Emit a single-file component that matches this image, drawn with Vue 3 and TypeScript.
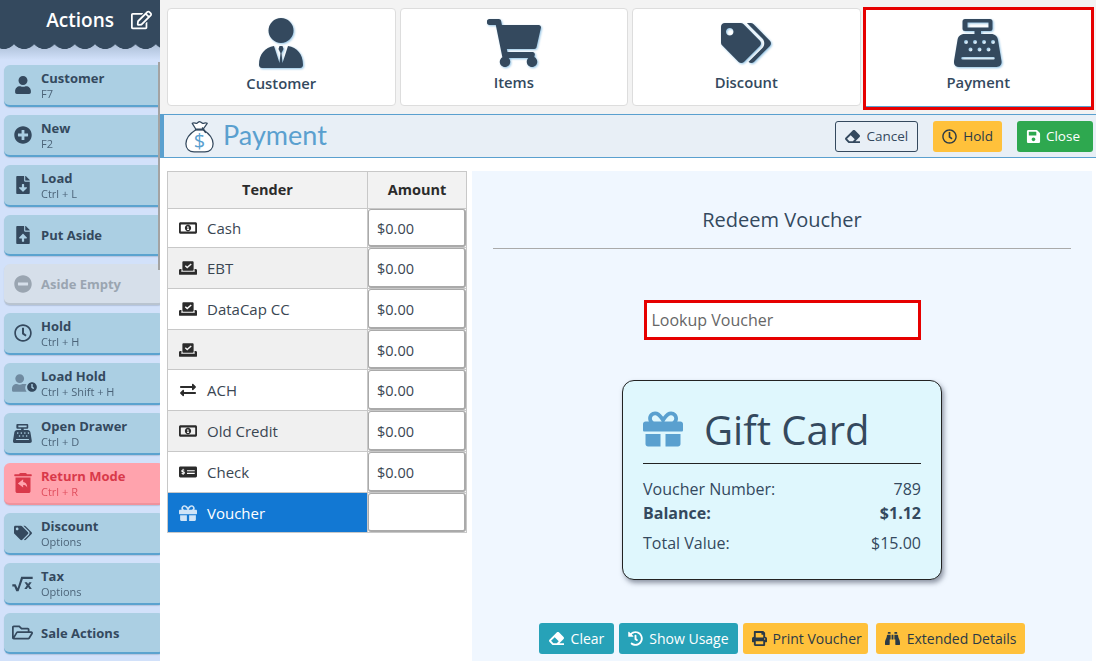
<script setup lang="ts">
import { h } from 'vue'

type Icon = { vb: string; d: string }

const icons: Record<string, Icon> = {
  user: { vb: '0 0 448 512', d: 'M224 256c70.7 0 128-57.3 128-128S294.7 0 224 0 96 57.3 96 128s57.3 128 128 128zm89.6 32h-16.7c-22.2 10.2-46.9 16-72.9 16s-50.6-5.8-72.9-16h-16.7C60.2 288 0 348.2 0 422.4V464c0 26.5 21.5 48 48 48h352c26.5 0 48-21.5 48-48v-41.6c0-74.2-60.2-134.4-134.4-134.4z' },
  plus: { vb: '0 0 512 512', d: 'M256 8C119 8 8 119 8 256s111 248 248 248 248-111 248-248S393 8 256 8zm144 276c0 6.6-5.4 12-12 12h-92v92c0 6.6-5.4 12-12 12h-56c-6.6 0-12-5.4-12-12v-92h-92c-6.6 0-12-5.4-12-12v-56c0-6.6 5.4-12 12-12h92v-92c0-6.6 5.4-12 12-12h56c6.6 0 12 5.4 12 12v92h92c6.6 0 12 5.4 12 12v56z' },
  minus: { vb: '0 0 512 512', d: 'M256 8C119 8 8 119 8 256s111 248 248 248 248-111 248-248S393 8 256 8zM124 296c-6.6 0-12-5.4-12-12v-56c0-6.6 5.4-12 12-12h264c6.6 0 12 5.4 12 12v56c0 6.6-5.4 12-12 12H124z' },
  fileDown: { vb: '0 0 384 512', d: 'M224 136V0H24C10.7 0 0 10.7 0 24v464c0 13.3 10.7 24 24 24h336c13.3 0 24-10.7 24-24V160H248c-13.2 0-24-10.8-24-24zm76.45 211.36l-96.42 95.7c-6.65 6.61-17.39 6.61-24.04 0l-96.42-95.7C73.42 337.29 80.54 320 94.82 320H160v-80c0-8.84 7.16-16 16-16h32c8.84 0 16 7.16 16 16v80h65.18c14.28 0 21.4 17.29 11.27 27.36zM377 105L279.1 7c-4.5-4.5-10.6-7-17-7H256v128h128v-6.1c0-6.3-2.5-12.4-7-16.9z' },
  fileUp: { vb: '0 0 384 512', d: 'M224 136V0H24C10.7 0 0 10.7 0 24v464c0 13.3 10.7 24 24 24h336c13.3 0 24-10.7 24-24V160H248c-13.2 0-24-10.8-24-24zm65.18 216.01H224v80c0 8.84-7.16 16-16 16h-32c-8.84 0-16-7.16-16-16v-80H94.82c-14.28 0-21.41-17.29-11.27-27.36l96.42-95.7c6.65-6.61 17.39-6.61 24.04 0l96.42 95.7c10.15 10.07 3.03 27.36-11.25 27.36zM377 105L279.1 7c-4.5-4.5-10.6-7-17-7H256v128h128v-6.1c0-6.3-2.5-12.4-7-16.9z' },
  clock: { vb: '0 0 512 512', d: 'M256 8C119 8 8 119 8 256s111 248 248 248 248-111 248-248S393 8 256 8zm0 448c-110.5 0-200-89.5-200-200S145.5 56 256 56s200 89.5 200 200-89.5 200-200 200zm61.8-104.4l-84.9-61.7c-3.1-2.3-4.9-5.9-4.9-9.7V116c0-6.6 5.4-12 12-12h32c6.6 0 12 5.4 12 12v141.7l66.8 48.6c5.4 3.9 6.5 11.4 2.6 16.8L334.6 349c-3.9 5.3-11.4 6.5-16.8 2.6z' },
  clockSolid: { vb: '0 0 512 512', d: 'M256 8C119 8 8 119 8 256s111 248 248 248 248-111 248-248S393 8 256 8zm57.100 350.100L224.900 294c-3.100-2.300-4.900-5.900-4.900-9.700V116c0-6.600 5.400-12 12-12h48c6.600 0 12 5.400 12 12v137.700l63.500 46.200c5.400 3.900 6.500 11.400 2.600 16.800l-28.200 38.800c-3.900 5.300-11.400 6.500-16.800 2.600z' },
  tags: { vb: '0 0 640 512', d: 'M497.941 225.941L286.059 14.059A48 48 0 0 0 252.118 0H48C21.49 0 0 21.49 0 48v204.118a48 48 0 0 0 14.059 33.941l211.882 211.882c18.744 18.745 49.136 18.746 67.882 0l204.118-204.118c18.745-18.745 18.745-49.137 0-67.882zM112 160c-26.51 0-48-21.49-48-48s21.49-48 48-48 48 21.49 48 48-21.49 48-48 48zm513.941 133.823L421.823 497.941c-18.745 18.745-49.137 18.745-67.882 0l-.36-.36L527.64 323.522c16.999-16.999 26.36-39.6 26.36-63.64s-9.362-46.641-26.36-63.64L331.397 0h48.721a48 48 0 0 1 33.941 14.059l211.882 211.882c18.745 18.745 18.745 49.137 0 67.882z' },
  cart: { vb: '0 0 576 512', d: 'M528.12 301.319l47.273-208C578.806 78.301 567.391 64 551.99 64H159.208l-9.166-44.81C147.758 8.021 137.93 0 126.529 0H24C10.745 0 0 10.745 0 24v16c0 13.255 10.745 24 24 24h69.883l70.248 343.435C147.325 417.1 136 435.222 136 456c0 30.928 25.072 56 56 56s56-25.072 56-56c0-15.674-6.447-29.835-16.824-40h209.647C430.447 426.165 424 440.326 424 456c0 30.928 25.072 56 56 56s56-25.072 56-56c0-22.172-12.888-41.332-31.579-50.405l5.517-24.276c3.413-15.018-8.002-29.319-23.403-29.319H218.117l-6.545-32h293.145c11.206 0 20.92-7.754 23.403-18.681z' },
  eraser: { vb: '0 0 512 512', d: 'M497.941 273.941c18.745-18.745 18.745-49.137 0-67.882l-160-160c-18.745-18.745-49.136-18.746-67.883 0l-256 256c-18.745 18.745-18.745 49.137 0 67.882l96 96A48.004 48.004 0 0 0 144 480h356c6.627 0 12-5.373 12-12v-40c0-6.627-5.373-12-12-12H355.883l142.058-142.059zm-302.627-62.627l137.373 137.373L265.373 416H150.628l-80-80 124.686-124.686z' },
  save: { vb: '0 0 448 512', d: 'M433.941 129.941l-83.882-83.882A48 48 0 0 0 316.118 32H48C21.49 32 0 53.49 0 80v352c0 26.51 21.49 48 48 48h352c26.51 0 48-21.49 48-48V163.882a48 48 0 0 0-14.059-33.941zM224 416c-35.346 0-64-28.654-64-64 0-35.346 28.654-64 64-64s64 28.654 64 64c0 35.346-28.654 64-64 64zm96-304.52V212c0 6.627-5.373 12-12 12H76c-6.627 0-12-5.373-12-12V108c0-6.627 5.373-12 12-12h228.52c3.183 0 6.235 1.264 8.485 3.515l3.48 3.48A11.996 11.996 0 0 1 320 111.48z' },
  print: { vb: '0 0 512 512', d: 'M448 192V77.25c0-8.49-3.37-16.62-9.37-22.63L393.37 9.37c-6-6-14.14-9.37-22.63-9.37H96C78.33 0 64 14.33 64 32v160c-35.35 0-64 28.65-64 64v112c0 8.84 7.16 16 16 16h48v96c0 17.67 14.33 32 32 32h320c17.67 0 32-14.33 32-32v-96h48c8.84 0 16-7.16 16-16V256c0-35.35-28.65-64-64-64zm-64 256H128v-96h256v96zm0-224H128V64h192v48c0 8.84 7.16 16 16 16h48v96zm48 72c-13.25 0-24-10.75-24-24 0-13.26 10.75-24 24-24s24 10.74 24 24c0 13.25-10.75 24-24 24z' },
  history: { vb: '0 0 512 512', d: 'M504 255.531c.253 136.64-111.18 248.372-247.82 248.468-59.015.042-113.223-20.53-155.822-54.911-11.077-8.94-11.905-25.541-1.839-35.607l11.267-11.267c8.609-8.609 22.353-9.551 31.891-1.984C173.062 425.135 212.781 440 256 440c101.705 0 184-82.311 184-184 0-101.705-82.311-184-184-184-48.814 0-93.149 18.969-126.068 49.932l50.754 50.754c10.08 10.08 2.941 27.314-11.313 27.314H24c-8.837 0-16-7.163-16-16V38.627c0-14.254 17.234-21.393 27.314-11.314l49.372 49.372C129.209 34.136 189.552 8 256 8c136.81 0 247.747 110.78 248 247.531zm-180.912 78.784l9.823-12.63c8.138-10.463 6.253-25.542-4.21-33.679L288 256.349V152c0-13.255-10.745-24-24-24h-16c-13.255 0-24 10.745-24 24v135.651l65.409 50.874c10.463 8.137 25.541 6.253 33.679-4.21z' },
  exchange: { vb: '0 0 512 512', d: 'M0 168v-16c0-13.255 10.745-24 24-24h360V80c0-21.367 25.899-32.042 40.971-16.971l80 80c9.372 9.373 9.372 24.569 0 33.941l-80 80C409.956 271.982 384 261.456 384 240v-48H24c-13.255 0-24-10.745-24-24zm488 152H128v-48c0-21.314-25.862-32.08-40.971-16.971l-80 80c-9.372 9.373-9.372 24.569 0 33.941l80 80C102.057 463.997 128 453.437 128 432v-48h360c13.255 0 24-10.745 24-24v-16c0-13.255-10.745-24-24-24z' },
  gift: { vb: '0 0 512 512', d: 'M32 448c0 17.7 14.3 32 32 32h160V320H32v128zm256 32h160c17.7 0 32-14.3 32-32V320H288v160zm192-320h-42.1c6.2-12.1 10.1-25.5 10.1-40 0-48.5-39.5-88-88-88-41.6 0-68.5 21.3-103 68.3-34.5-47-61.4-68.3-103-68.3-48.5 0-88 39.5-88 88 0 14.5 3.8 27.9 10.1 40H32c-17.7 0-32 14.3-32 32v80c0 8.8 7.2 16 16 16h480c8.8 0 16-7.2 16-16v-80c0-17.7-14.3-32-32-32zm-326.1 0c-22.1 0-40-17.9-40-40s17.9-40 40-40c19.9 0 34.6 3.3 86.1 80h-86.1zm206.1 0h-86.1c51.4-76.5 65.7-80 86.1-80 22.1 0 40 17.9 40 40s-17.9 40-40 40z' },
  edit: { vb: '0 0 576 512', d: 'M402.3 344.9l32-32c5-5 13.7-1.5 13.7 5.7V464c0 26.5-21.5 48-48 48H48c-26.5 0-48-21.5-48-48V112c0-26.5 21.5-48 48-48h273.5c7.1 0 10.7 8.6 5.7 13.7l-32 32c-1.5 1.5-3.5 2.3-5.7 2.3H48v352h352V350.5c0-2.1.8-4.1 2.3-5.6zm156.6-201.8L296.3 405.7l-90.4 10c-26.2 2.9-48.5-19.2-45.6-45.6l10-90.4L432.9 17.1c22.9-22.9 59.9-22.9 82.7 0l43.2 43.2c22.9 22.9 22.9 60 .1 82.8zM460.1 174L402 115.9 216.2 301.8l-7.3 65.3 65.3-7.3L460.1 174zm64.8-79.7l-43.2-43.2c-4.1-4.1-10.8-4.1-14.8 0L436 82l58.1 58.1 30.9-30.9c4-4.2 4-10.8-.1-14.9z' },
  folder: { vb: '0 0 576 512', d: 'M527.9 224H480v-48c0-26.5-21.5-48-48-48H272l-64-64H48C21.5 64 0 85.5 0 112v288c0 26.5 21.5 48 48 48h400c16.5 0 31.9-8.5 40.7-22.6l79.9-128c20-31.9-3-73.4-40.7-73.4zM48 118c0-3.3 2.7-6 6-6h134.1l64 64H426c3.3 0 6 2.7 6 6v42H152c-16.8 0-32.4 8.8-41.1 23.2L48 351.4zm400 282H72l77.2-128H528z' },
  // hand drawn ones below
  register: { vb: '0 0 48 48', d: 'M11 0h25a2.500 2.500 0 0 1 2.500 2.500v7a2.500 2.500 0 0 1-2.500 2.500h-9v3h10c4 0 6.500 2.500 7 6l3.500 21c.5 3.500-1.500 6-5 6H5c-3.500 0-5.500-2.500-5-6l3.500-21c.5-3.500 3-6 7-6h10v-3H11a2.500 2.500 0 0 1-2.500-2.500v-7A2.500 2.500 0 0 1 11 0zm2.500 3.500v5h21v-5zM12 21a2 2 0 1 0 0 4 2 2 0 0 0 0-4zm9 0a2 2 0 1 0 0 4 2 2 0 0 0 0-4zm9 0a2 2 0 1 0 0 4 2 2 0 0 0 0-4zm9 0a2 2 0 1 0 0 4 2 2 0 0 0 0-4zM16.500 28.500a2 2 0 1 0 0 4 2 2 0 0 0 0-4zm9 0a2 2 0 1 0 0 4 2 2 0 0 0 0-4zm9 0a2 2 0 1 0 0 4 2 2 0 0 0 0-4zM8.500 38a1.250 1.250 0 0 0 0 2.500h31a1.250 1.250 0 0 0 0-2.500z' },
  suit: { vb: '0 0 44 50', d: 'M22 0a12.500 12.500 0 1 1 0 25 12.500 12.500 0 0 1 0-25zM15 28l5.500 17 1-10-2-4 1-3h3l1 3-2 4 1 10L29 28c9 1.500 15 8 15 19 0 1.500-1 3-3 3H3c-2 0-3-1.500-3-3 0-11 6-17.500 15-19z' },
  cash: { vb: '0 0 640 512', d: 'M56 48h528c31 0 56 25 56 56v304c0 31-25 56-56 56H56c-31 0-56-25-56-56V104c0-31 25-56 56-56zm24 80a16 16 0 0 0-16 16v224a16 16 0 0 0 16 16h480a16 16 0 0 0 16-16V144a16 16 0 0 0-16-16zm240 16c62 0 112 50 112 112s-50 112-112 112-112-50-112-112 50-112 112-112zm-34 58v32h18v60h-18v32h72v-32h-18V202z' },
  vote: { vb: '0 0 640 512', d: 'M152 16h336c17.700 0 32 14.300 32 32v272c0 17.700-14.300 32-32 32H152c-17.700 0-32-14.300-32-32V48c0-17.700 14.300-32 32-32zm300 112-34-34-126 112-52-46-34 36 86 80zM48 288h40v64H80v40h480v-40h-8v-64h40c26.500 0 48 21.500 48 48v144c0 8.800-7.200 16-16 16H16c-8.800 0-16-7.200-16-16V336c0-26.500 21.500-48 48-48z' },
  check: { vb: '0 0 640 512', d: 'M48 64h544c26.500 0 48 21.500 48 48v288c0 26.500-21.500 48-48 48H48c-26.500 0-48-21.500-48-48V112c0-26.500 21.500-48 48-48zm112 76h-28v26c-30 5-50 26-50 52 0 30 24 44 50 52 22 6 30 10 30 18 0 7-8 11-20 11-12 0-26-4-40-12l-16 34c14 8 30 13 46 14v27h28v-28c30-6 48-26 48-52 0-30-22-44-48-52-22-7-32-11-32-18 0-6 6-10 16-10 12 0 24 4 36 10l14-32c-10-6-22-10-34-12zm124 52v40h276v-40zm0 92v40h276v-40z' },
  binoculars: { vb: '0 0 512 512', d: 'M416 48c0-8.840-7.160-16-16-16h-64c-8.840 0-16 7.160-16 16v48h96V48zM63.910 159.990C61.400 253.840 3.460 274.220 0 404v44c0 17.670 14.330 32 32 32h96c17.670 0 32-14.330 32-32V288h32V128H95.840c-17.630 0-31.470 14.370-31.930 31.990zm384.180 0c-.47-17.620-14.310-31.990-31.940-31.990H320v160h32v160c0 17.670 14.330 32 32 32h96c17.670 0 32-14.330 32-32v-44c-3.460-129.780-61.400-150.160-63.910-244.010zM176 32h-64c-8.840 0-16 7.160-16 16v48h96V48c0-8.840-7.160-16-16-16zm48 256h64V128h-64v160z' },
  sqrt: { vb: '0 0 640 512', d: 'M10 280h100l60 120L280 50h350v70H330L200 490h-70L70 350H10zM380 220h75l35 55 35-55h75l-70 95 75 105h-75l-40-60-40 60h-75l75-105z' },
  userClock: { vb: '0 0 640 512', d: 'M224 256a128 128 0 1 0 0-256 128 128 0 0 0 0 256zm80 32c-26 12-52 16-80 16s-54-4-80-16h-10C60 288 0 348 0 422v42c0 26 22 48 48 48h352c9 0 17-2 24-7-24-30-40-68-40-109 0-40 14-78 38-106-30-2-50-2-108-2z' },
  trashUndo: { vb: '0 0 448 512', d: 'M160 0h128a32 32 0 0 1 30 21l7 11h107a16 16 0 0 1 16 16v16a16 16 0 0 1-16 16H16A16 16 0 0 1 0 64V48a16 16 0 0 1 16-16h107l7-11A32 32 0 0 1 160 0zM32 112h384v352c0 26.500-21.500 48-48 48H80c-26.500 0-48-21.500-48-48zm196 50L92 268l136 106v-66c44 0 76 12 104 66 0-90-40-142-104-146z' }
}

// small svg helper so the template stays readable
const Ico = (props: { name: string }) => {
  const i = icons[props.name]
  return h('svg', { viewBox: i.vb, xmlns: 'http://www.w3.org/2000/svg' }, [
    h('path', { d: i.d, fill: 'currentColor', 'fill-rule': 'evenodd' })
  ])
}
Ico.props = ['name']

const actions = [
  { title: 'Customer', sub: 'F7', icon: 'user', size: 18 },
  { title: 'New', sub: 'F2', icon: 'plus', size: 18 },
  { title: 'Load', sub: 'Ctrl + L', icon: 'fileDown', size: 18 },
  { title: 'Put Aside', sub: '', icon: 'fileUp', size: 18 },
  { title: 'Aside Empty', sub: '', icon: 'minus', size: 18, kind: 'off' },
  { title: 'Hold', sub: 'Ctrl + H', icon: 'clock', size: 18 },
  { title: 'Load Hold', sub: 'Ctrl + Shift + H', icon: 'userClock', size: 22, badge: true },
  { title: 'Open Drawer', sub: 'Ctrl + D', icon: 'register', size: 19 },
  { title: 'Return Mode', sub: 'Ctrl + R', icon: 'trashUndo', size: 20, kind: 'ret' },
  { title: 'Discount', sub: 'Options', icon: 'tags', size: 18 },
  { title: 'Tax', sub: 'Options', icon: 'sqrt', size: 21 },
  { title: 'Sale Actions', sub: '', icon: 'folder', size: 21 }
]

const tabs = [
  { label: 'Customer', icon: 'suit', w: 44, h: 50 },
  { label: 'Items', icon: 'cart', w: 54, h: 48 },
  { label: 'Discount', icon: 'tags', w: 50, h: 48 },
  { label: 'Payment', icon: 'register', w: 48, h: 48, active: true }
]

const tenders = [
  { name: 'Cash', icon: 'cash' },
  { name: 'EBT', icon: 'vote' },
  { name: 'DataCap CC', icon: 'vote' },
  { name: '', icon: 'vote' },
  { name: 'ACH', icon: 'exchange' },
  { name: 'Old Credit', icon: 'cash' },
  { name: 'Check', icon: 'check' },
  { name: 'Voucher', icon: 'gift', selected: true }
]
</script>

<template>
  <div class="page">
    <aside class="side">
      <div class="side-head">
        <span class="side-title">Actions</span>
        <Ico name="edit" class="side-edit" />
      </div>
      <div class="scallop"></div>
      <div class="action-list">
        <div
          v-for="a in actions"
          :key="a.title"
          class="action"
          :class="[a.kind, { plain: !a.sub }]"
        >
          <span class="action-icon" :class="{ faded: a.badge }">
            <Ico :name="a.icon" :style="{ width: a.size + 'px', height: a.size + 'px' }" />
            <span v-if="a.badge" class="clock-badge"><Ico name="clockSolid" /></span>
          </span>
          <span class="action-text">
            <b>{{ a.title }}</b>
            <small v-if="a.sub">{{ a.sub }}</small>
          </span>
        </div>
      </div>
      <div class="thumb"></div>
    </aside>

    <main class="main">
      <div class="tabs">
        <div v-for="t in tabs" :key="t.label" class="tab" :class="{ active: t.active }">
          <Ico :name="t.icon" class="tab-icon" :style="{ width: t.w + 'px', height: t.h + 'px' }" />
          <span>{{ t.label }}</span>
        </div>
      </div>

      <header class="bar">
        <svg class="bag" viewBox="0 0 32 36" xmlns="http://www.w3.org/2000/svg">
          <path d="M12 10 8 3.500c2-1.500 4 .5 5 0s2-2 3-2 2 1.500 3.500 2 3-1.500 5 0L20 10z" fill="#fff" stroke="#34495e" stroke-width="1.400" stroke-linejoin="round" />
          <path d="M12 10.500C5 15 1 21 1 26c0 6 4 9 9 9h12c5 0 9-3 9-9 0-5-4-11-11-15.500z" fill="#fff" stroke="#34495e" stroke-width="1.400" stroke-linejoin="round" />
          <path d="M11 10.500h10M19 8l4 6" stroke="#34495e" stroke-width="1.800" />
          <text x="16" y="31" text-anchor="middle" class="bag-sign">$</text>
        </svg>
        <h1>Payment</h1>
        <div class="bar-btns">
          <button class="btn outline"><Ico name="eraser" />Cancel</button>
          <button class="btn yellow"><Ico name="clock" />Hold</button>
          <button class="btn green"><Ico name="save" />Close</button>
        </div>
      </header>

      <section class="content">
        <table class="tender">
          <thead>
            <tr><th class="c1">Tender</th><th class="c2">Amount</th></tr>
          </thead>
          <tbody>
            <tr v-for="t in tenders" :key="t.name + t.icon" :class="{ sel: t.selected }">
              <td class="name">
                <span class="name-in"><Ico :name="t.icon" :class="{ small: t.icon === 'exchange' }" />{{ t.name }}</span>
              </td>
              <td class="amt">
                <div class="amt-box">{{ t.selected ? '' : '$0.00' }}</div>
              </td>
            </tr>
          </tbody>
        </table>

        <div class="panel">
          <h2>Redeem Voucher</h2>
          <hr />
          <div class="lookup">Lookup Voucher</div>
          <div class="card">
            <div class="card-head">
              <Ico name="gift" />
              <span>Gift Card</span>
            </div>
            <div class="card-row first"><span>Voucher Number:</span><span>789</span></div>
            <div class="card-row bold"><span>Balance:</span><span>$1.12</span></div>
            <div class="card-row last"><span>Total Value:</span><span>$15.00</span></div>
          </div>
          <div class="panel-btns">
            <button class="btn teal"><Ico name="eraser" />Clear</button>
            <button class="btn teal"><Ico name="history" />Show Usage</button>
            <button class="btn yellow"><Ico name="print" />Print Voucher</button>
            <button class="btn yellow"><Ico name="binoculars" />Extended Details</button>
          </div>
        </div>
      </section>
    </main>
  </div>
</template>

<style>
html, body {
  margin: 0;
  background: #fff;
  overflow: hidden;
}
</style>

<style scoped>
.page {
  display: flex;
  width: 1096px;
  height: 661px;
  overflow: hidden;
  font-family: "Open Sans", "Liberation Sans", sans-serif;
  color: #34495e;
}

/* left rail */
.side {
  position: relative;
  flex: 0 0 160px;
  background: #d2e1fa;
  overflow: hidden;
}
.side-head {
  height: 43px;
  background: #34495e;
  color: #fff;
  display: flex;
  align-items: center;
  justify-content: flex-end;
  padding-right: 8px;
  box-sizing: border-box;
}
.side-title {
  font-size: 19px;
  font-weight: 600;
  margin-right: 17px;
  margin-bottom: 3px;
}
.side-edit {
  width: 21px;
  height: 20px;
  margin-bottom: 3px;
}
.scallop {
  height: 22px;
  background:
    radial-gradient(circle at 10.125px -7px, #34495e 12.700px, transparent 13.200px) 14px 0 / 20.250px 6px repeat-x,
    linear-gradient(#a9bcd4, #d2e1fa 17px);
}
.action-list {
  display: flex;
  flex-direction: column;
  gap: 8px;
  padding-left: 4px;
}
.action {
  display: flex;
  align-items: center;
  height: 42px;
  width: 160px;
  box-sizing: border-box;
  background: #abcfe3;
  border-bottom: 2px solid #5ba3cf;
  border-radius: 6px;
  box-shadow: 0 1px 1px rgba(60, 80, 110, .2);
}
.action.plain { height: 41px; }
.action.off {
  background: #d6dfea;
  border-bottom-color: #b9c4d0;
  color: #9aa5b1;
}
.action.ret {
  background: #ffa3ad;
  border-bottom-color: #f0929c;
  color: #d9394a;
}
.action-icon {
  position: relative;
  flex: 0 0 37px;
  height: 100%;
  display: flex;
  align-items: center;
  justify-content: center;
}
.action-icon svg { display: block; }
.action-icon.faded > svg { color: #6f8aa0; }
.clock-badge {
  position: absolute;
  left: 23px;
  top: 19px;
  width: 10px;
  height: 10px;
  color: #34495e;
}
.clock-badge svg { width: 10px; height: 10px; }
.action-text {
  display: flex;
  flex-direction: column;
}
.action:not(.plain) .action-text { padding-top: 2px; }
.action-text b {
  font-size: 13px;
  line-height: 16px;
  font-weight: 700;
}
.action-text small {
  font-size: 11px;
  line-height: 16px;
  opacity: .8;
}
.thumb {
  position: absolute;
  left: 158px;
  top: 62px;
  width: 2px;
  height: 208px;
  background: #a3a3a3;
}

/* right side */
.main {
  flex: 1;
  min-width: 0;
  display: flex;
  flex-direction: column;
}
.tabs {
  display: grid;
  grid-template-columns: repeat(4, 1fr);
  gap: 4px;
  padding: 8px 3px 8px 7px;
  height: 114px;
  box-sizing: border-box;
  background: #f3f3f3;
}
.tab {
  display: flex;
  flex-direction: column;
  align-items: center;
  justify-content: flex-end;
  background: #fff;
  border: 1px solid #ddd;
  border-radius: 4px;
  font-size: 14.800px;
  font-weight: 600;
  padding-bottom: 13px;
  box-sizing: border-box;
}
.tab:first-child { padding-bottom: 12px; }
.tab-icon {
  filter: drop-shadow(1px 1px 1px #8fc1e3);
  margin-bottom: 5px;
}
.tab.active {
  border: 3px solid #e60000;
  border-radius: 0;
  margin: -1px -1px -4px -2px;
  padding-bottom: 15px;
  box-shadow: inset 0 -1px 0 #5aa0cf;
}
.bar {
  display: flex;
  align-items: center;
  height: 44px;
  box-sizing: border-box;
  background: #e8eff6;
  border-top: 1px solid #5aa0cf;
  border-bottom: 1px solid #5aa0cf;
  border-left: 4px solid #5aa0cf;
  padding-left: 21px;
  box-shadow: 0 2px 3px rgba(0, 0, 0, .1);
}
.bag {
  width: 29px;
  height: 33px;
  margin-top: 1px;
}
.bag-sign {
  font-size: 22px;
  fill: #5aa0cf;
  font-family: "Open Sans", sans-serif;
}
.bar h1 {
  margin: 0 0 3px 9px;
  font-family: Lato, "Open Sans", sans-serif;
  font-size: 27px;
  font-weight: 400;
  color: #5aa0cf;
}
.bar-btns {
  margin-left: auto;
  display: flex;
  gap: 15px;
  padding-right: 3px;
}
.bar-btns .btn {
  font-size: 13.500px;
  gap: 6px;
}
.bar-btns .btn.green {
  gap: 5px;
  padding: 0 13px 0 9px;
}
.btn {
  display: inline-flex;
  align-items: center;
  gap: 7px;
  height: 31px;
  padding: 0 9px;
  box-sizing: border-box;
  border: 0;
  border-radius: 3px;
  font-family: inherit;
  font-size: 14px;
  white-space: nowrap;
}
.btn svg { width: 15px; height: 15px; }
.btn.outline {
  background: transparent;
  border: 1px solid #34495e;
  color: #34495e;
}
.btn.yellow { background: #ffc13b; color: #2b3a46; }
.btn.green { background: #2ea84f; color: #fff; }
.btn.teal { background: #27a2b8; color: #fff; }

.content {
  flex: 1;
  display: flex;
  align-items: flex-start;
  background: #fff;
  padding: 13px 4px 0 7px;
  min-height: 0;
}
.tender {
  border-collapse: collapse;
  table-layout: fixed;
  width: 300px;
  flex: 0 0 300px;
  font-size: 15px;
}
.tender th {
  background: #f2f2f2;
  border: 1px solid #c8c8c8;
  height: 34px;
  font-size: 14.500px;
  font-weight: 700;
  color: #2b2b2b;
  padding: 0 0 2px;
}
.c1 { width: 199px; }
.tender td {
  border: 1px solid #c8c8c8;
  padding: 0;
}
.tender tbody tr:nth-child(even) .name { background: #f0f0f0; }
.name-in {
  display: flex;
  align-items: center;
  gap: 10px;
  padding-left: 11px;
  color: #3a4652;
}
.name-in svg {
  width: 18px;
  height: 18px;
  color: #2b2b2b;
}
.name-in svg.small { height: 16px; }
.tender tbody tr.sel .name {
  background: #1278d3;
}
.tender tr.sel .name-in { color: #fff; }
.tender tr.sel .name-in svg { color: #cfe4f7; }
.amt-box {
  height: 40px;
  box-sizing: border-box;
  border: 2px solid #aaa;
  border-top-width: 1px;
  border-left-width: 1px;
  border-radius: 3px;
  background: #fff;
  padding-left: 8px;
  line-height: 40px;
  font-size: 14.500px;
  color: #3a4652;
}
.tender tbody tr:first-child .amt-box {
  height: 38px;
  line-height: 38px;
}
.tender tbody tr:nth-child(4) .amt-box { height: 39px; line-height: 39px; }
.tender tbody tr:last-child .amt-box { height: 39px; }
.panel {
  flex: 1;
  align-self: stretch;
  margin-left: 5px;
  background: #f0f7ff;
  padding: 0 21px;
  display: flex;
  flex-direction: column;
  align-items: center;
  overflow: hidden;
}
.panel h2 {
  margin: 36px 0 15px;
  font-size: 20px;
  line-height: 26px;
  font-weight: 400;
}
.panel hr {
  width: 100%;
  margin: 0;
  border: 0;
  border-top: 1px solid #aaa;
}
.lookup {
  flex: none;
  margin-top: 51px;
  width: 277px;
  height: 40px;
  box-sizing: border-box;
  border: 3px solid #e60000;
  background: #fff;
  padding-left: 5px;
  font-size: 16px;
  line-height: 34px;
  color: #666;
}
.card {
  flex: none;
  margin-top: 40px;
  width: 320px;
  height: 200px;
  box-sizing: border-box;
  background: #dff7fd;
  border: 1px solid #222;
  border-radius: 12px;
  box-shadow: 2px 3px 5px rgba(60, 70, 90, .55);
  padding: 26px 20px 0;
}
.card-head {
  display: flex;
  align-items: center;
  gap: 21px;
  border-bottom: 1px solid #222;
  height: 57px;
  padding-bottom: 10px;
  font-size: 40px;
  line-height: 50px;
  box-sizing: border-box;
}
.card-head svg {
  width: 40px;
  height: 40px;
  color: #5aa0cf;
  margin-bottom: 2px;
}
.card-row {
  display: flex;
  justify-content: space-between;
  font-size: 16px;
  line-height: 24px;
}
.card-row.first { margin-top: 13px; }
.card-row.bold { font-weight: 700; }
.card-row.last { margin-top: 6px; }
.panel-btns {
  flex: none;
  margin-top: 43px;
  display: flex;
  gap: 5px;
}
.panel-btns .btn:nth-child(1) { padding: 0 10px; }
.panel-btns .btn:nth-child(2) { gap: 6px; }
.panel-btns .btn:nth-child(3) { margin-right: 3px; padding-right: 6px; gap: 6px; }
</style>
